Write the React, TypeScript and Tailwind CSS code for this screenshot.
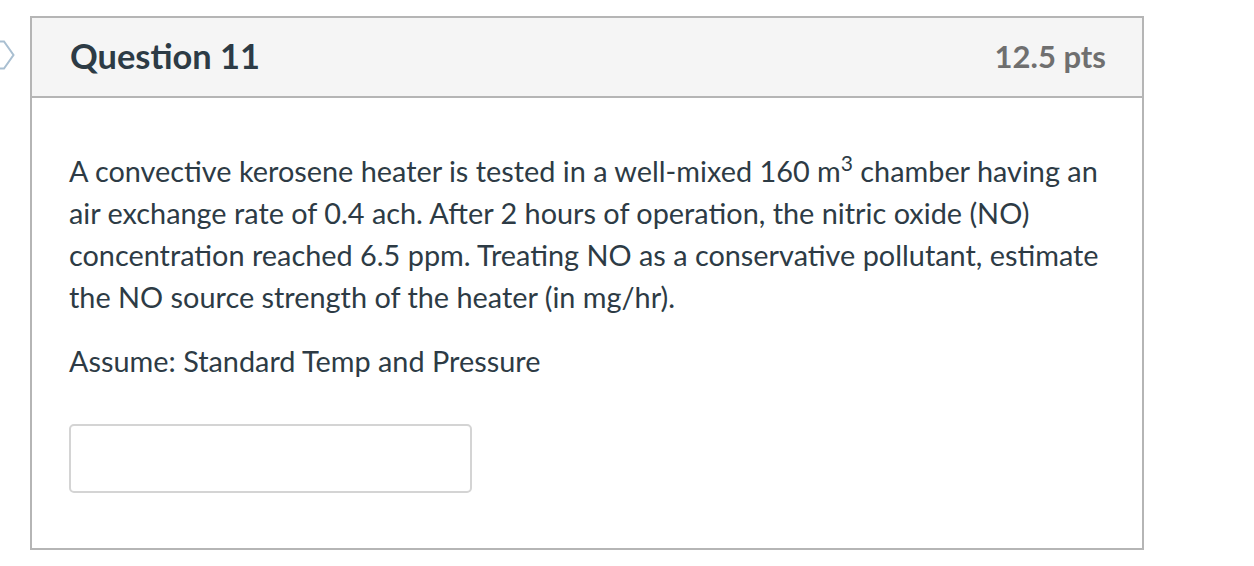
import React from "react";

export default function App() {
  return (
    <div className="w-[1254px] h-[566px] bg-white relative overflow-hidden" style={{ fontFamily: "Lato, 'Noto Sans', sans-serif" }}>
      <svg className="absolute left-0 top-[40px]" width="16" height="32" viewBox="0 0 16 32">
        <polyline points="-10,1.5 4,1.5 13.5,15 4,28.5 -10,28.5" fill="none" stroke="#a9bfd1" strokeWidth="2" />
      </svg>
      <div className="pt-[16px] pl-[30px]">
        <div className="w-[1114px] h-[534px] border-2 border-[#b5b5b5] flex flex-col">
          <div className="h-[80px] bg-[#f5f5f5] border-b-2 border-[#b5b5b5] flex items-center justify-between pl-[38px] pr-[36px] pb-[2px]">
            <span className="text-[34.4px] font-bold text-[#2d3b45]">Question 11</span>
            <span className="text-[31px] font-bold text-[#6f6f6f]">12.5 pts</span>
          </div>
          <div className="pl-[37px] pr-[33px] pt-[52px] text-[28.85px] leading-[42px] text-[#2d3b45]">
            <p>
              A convective kerosene heater is tested in a well-mixed 160 m<sup className="text-[21px] relative top-[-11px] align-baseline leading-none">3</sup> chamber having an air exchange rate of 0.4 ach. After 2 hours of operation, the nitric oxide (NO) concentration reached 6.5 ppm. Treating NO as a conservative pollutant, estimate the NO source strength of the heater (in mg/hr).
            </p>
            <p className="mt-[22px]">Assume: Standard Temp and Pressure</p>
            <div className="mt-[42px] w-[403px] h-[69px] border-2 border-[#d4d4d4] rounded-[5px] bg-white" />
          </div>
        </div>
      </div>
    </div>
  );
}
